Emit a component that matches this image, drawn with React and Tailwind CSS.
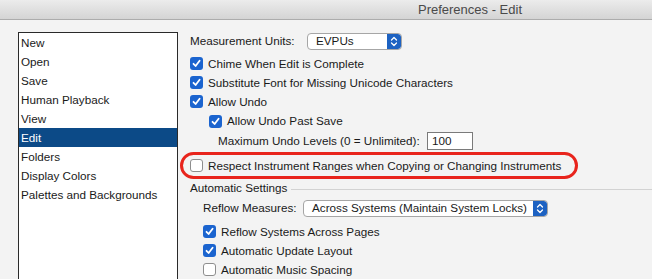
import React from 'react';

const listItems = ['New', 'Open', 'Save', 'Human Playback', 'View', 'Edit', 'Folders', 'Display Colors', 'Palettes and Backgrounds'];

function Check({ checked }) {
  if (!checked) {
    return <span className="block w-[13px] h-[13px] rounded-[3px] border border-[#8e8e8e] bg-white shrink-0" />;
  }
  return (
    <span className="flex items-center justify-center w-[13px] h-[13px] rounded-[3px] bg-[#1b64cf] shrink-0">
      <svg width="9" height="9" viewBox="0 0 9 9">
        <path d="M1.5 4.8 L3.6 7 L7.6 1.8" fill="none" stroke="white" strokeWidth="1.8" strokeLinecap="round" strokeLinejoin="round" />
      </svg>
    </span>
  );
}

function Stepper() {
  return (
    <span className="flex items-center justify-center w-[14px] h-full bg-[#1d62c2] rounded-r-[3px]">
      <svg width="8" height="11" viewBox="0 0 8 11">
        <path d="M1.5 4 L4 1.5 L6.5 4 M1.5 7 L4 9.5 L6.5 7" fill="none" stroke="white" strokeWidth="1.3" strokeLinecap="round" strokeLinejoin="round" />
      </svg>
    </span>
  );
}

function Popup({ value, width }) {
  return (
    <div className={`flex items-center h-[17px] border border-[#a6a6a6] rounded-[4px] bg-white overflow-hidden ${width}`}>
      <span className="flex-1 pl-[8px] leading-none">{value}</span>
      <Stepper />
    </div>
  );
}

function CheckRow({ checked, label, className = '' }) {
  return (
    <div className={`flex items-center gap-[5px] h-[19px] ${className}`}>
      <Check checked={checked} />
      <span className="leading-none">{label}</span>
    </div>
  );
}

export default function App() {
  return (
    <div className="w-[652px] h-[279px] overflow-hidden bg-[#f3f3f3] text-[11.7px] text-[#1a1a1a]" style={{ fontFamily: '"Liberation Sans", Arial, sans-serif' }}>
      {/* title bar */}
      <div className="h-[20px] flex items-center justify-center pl-[288px] bg-gradient-to-b from-[#ececec] to-[#d4d4d4] border-b border-[#acacac] text-[13px] text-[#4a4a4a]">
        Preferences - Edit
      </div>

      <div className="flex">
        {/* category list */}
        <div className="ml-[18px] mt-[12px] w-[160px] h-[300px] border border-[#2a2a2a] bg-white shrink-0">
          {listItems.map(item => (
            <div
              key={item}
              className={`h-[19px] flex items-center pl-[2px] leading-none ${item === 'Edit' ? 'bg-[#0c4a87] text-white' : ''}`}
            >
              {item}
            </div>
          ))}
        </div>

        {/* settings */}
        <div className="ml-[12px] mt-[12px] flex-1 flex flex-col">
          <div className="flex items-center h-[18px]">
            <span className="w-[117px] leading-none">Measurement Units:</span>
            <Popup value="EVPUs" width="w-[95px]" />
          </div>
          <CheckRow className="mt-[4px]" checked label="Chime When Edit is Complete" />
          <CheckRow checked label="Substitute Font for Missing Unicode Characters" />
          <CheckRow checked label="Allow Undo" />
          <CheckRow className="ml-[19px] h-[20px]" checked label="Allow Undo Past Save" />
          <div className="flex items-center h-[19px] ml-[28px]">
            <span className="w-[209px] leading-none">Maximum Undo Levels (0 = Unlimited):</span>
            <div className="w-[46px] h-[18px] border border-[#7a7a7a] bg-white flex items-center pl-[4px] leading-none">100</div>
          </div>

          <div className="mt-[2px] -ml-[10px] w-[398px] h-[27px] border-[3px] border-[#e8241c] rounded-full flex items-center gap-[5px] pl-[7px]">
            <Check />
            <span className="leading-none">Respect Instrument Ranges when Copying or Changing Instruments</span>
          </div>

          <div className="flex items-center h-[17px]">
            <span className="leading-none">Automatic Settings</span>
            <span className="flex-1 ml-[4px] h-px bg-[#d2d2d2] mt-[3px]" />
          </div>
          <div className="flex items-center h-[18px] mt-[3px] ml-[13px]">
            <span className="w-[100px] leading-none">Reflow Measures:</span>
            <Popup value="Across Systems (Maintain System Locks)" width="w-[245px]" />
          </div>
          <CheckRow className="mt-[5px] ml-[13px]" checked label="Reflow Systems Across Pages" />
          <CheckRow className="ml-[13px]" checked label="Automatic Update Layout" />
          <CheckRow className="ml-[13px]" label="Automatic Music Spacing" />
        </div>
      </div>
    </div>
  );
}
